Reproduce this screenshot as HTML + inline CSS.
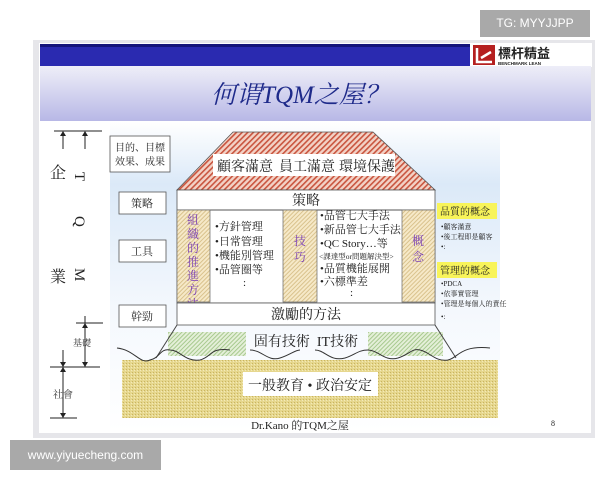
<!DOCTYPE html>
<html><head><meta charset="utf-8"><style>
html,body{margin:0;padding:0;background:#fff;width:600px;height:480px;overflow:hidden;position:relative}
*{font-family:"Liberation Serif","Noto Serif CJK SC","Noto Sans CJK TC",serif}
.wm{position:absolute;background:#a9a9a9;color:#fff;font-family:"Liberation Sans","DejaVu Sans",sans-serif}
</style></head><body>
<svg width="600" height="480" style="position:absolute;left:0;top:0">
<defs>
<linearGradient id="tb" x1="0" y1="0" x2="0" y2="1"><stop offset="0" stop-color="#eeeef8"/><stop offset="1" stop-color="#b8b8e6"/></linearGradient>
<linearGradient id="sky" x1="0" y1="0" x2="0" y2="1"><stop offset="0" stop-color="#ffffff"/><stop offset="0.2" stop-color="#dbe9f8"/><stop offset="0.6" stop-color="#f4f8fd"/><stop offset="1" stop-color="#ffffff"/></linearGradient>
<pattern id="roof" width="4" height="4" patternUnits="userSpaceOnUse" patternTransform="rotate(45)"><rect width="4" height="4" fill="#f3d2c6"/><rect width="1.6" height="4" fill="#c9553f"/></pattern>
<pattern id="col" width="3" height="3" patternUnits="userSpaceOnUse" patternTransform="rotate(45)"><rect width="3" height="3" fill="#f6e9c8"/><rect width="1" height="3" fill="#d9c28d"/></pattern>
<pattern id="gr" width="3" height="3" patternUnits="userSpaceOnUse"><rect width="3" height="3" fill="#e6d78e"/><rect width="1" height="1" fill="#c9b460"/><rect x="2" y="1" width="1" height="1" fill="#f3eab9"/></pattern>
<pattern id="gn" width="3" height="3" patternUnits="userSpaceOnUse" patternTransform="rotate(45)"><rect width="3" height="3" fill="#e4efd8"/><rect width="1" height="3" fill="#a7c98e"/></pattern>
</defs>
<rect x="33" y="40" width="562" height="398" fill="#e6e6ea"/>
<rect x="39" y="43" width="552" height="390" fill="#fff"/>
<rect x="40" y="44" width="430" height="22" fill="#2a2ab0"/>
<rect x="40" y="44" width="430" height="3" fill="#15157a"/>
<rect x="470" y="43" width="122" height="24" fill="#fff"/>
<rect x="473" y="45" width="22" height="20" fill="#b52020"/>
<path d="M477 48 v14 h15 M481 58 l10-6" stroke="#fff" stroke-width="2.5" fill="none"/>
<text x="498" y="58" font-size="13" font-weight="bold" fill="#222" style="font-family:'Noto Sans CJK TC',sans-serif">標杆精益</text>
<text x="498" y="65" font-size="4.5" font-weight="bold" fill="#222" style="font-family:'Liberation Sans',sans-serif">BENCHMARK LEAN</text>
<rect x="40" y="66" width="551" height="55" fill="url(#tb)"/>
<text x="300" y="103" text-anchor="middle" font-size="25" font-style="italic" fill="#1e2a8a">何谓TQM之屋？</text>
<rect x="110" y="122" width="390" height="310" fill="url(#sky)"/>
<g stroke="#222" stroke-width="1" fill="none">
<line x1="54" y1="131" x2="102" y2="131"/>
<line x1="63" y1="133" x2="63" y2="149"/><line x1="85" y1="133" x2="85" y2="149"/>
<line x1="85" y1="316" x2="85" y2="367"/><line x1="76" y1="323" x2="103" y2="323"/>
<line x1="50" y1="367" x2="100" y2="367"/><line x1="63" y1="350" x2="63" y2="418"/>
<line x1="50" y1="418" x2="77" y2="418"/>
</g>
<g fill="#222"><path d="M63 131l-3 5h6z M85 131l-3 5h6z M85 323l-3 5h6z M85 367l-3-5h6z M63 367l-3-5h6z M63 367l-3 5h6z M63 418l-3-5h6z"/></g>
<text x="50" y="178" font-size="16" fill="#222">企</text>
<text x="50" y="282" font-size="16" fill="#222">業</text>
<text font-size="15" fill="#222" transform="translate(75,172) rotate(90)">T</text>
<text font-size="15" fill="#222" transform="translate(75,216) rotate(90)">Q</text>
<text font-size="15" fill="#222" transform="translate(75,268) rotate(90)">M</text>
<text x="73" y="346" font-size="9" fill="#333">基礎</text>
<text x="53" y="398" font-size="10" fill="#333">社會</text>
<g fill="#fff" stroke="#555" stroke-width="0.8">
<rect x="110" y="136" width="60" height="36"/><rect x="119" y="192" width="47" height="22"/>
<rect x="119" y="240" width="47" height="22"/><rect x="119" y="305" width="47" height="22"/></g>
<g font-size="10" fill="#222"><text x="115" y="151">目的、目標</text><text x="115" y="165">效果、成果</text></g>
<g font-size="11" fill="#222"><text x="131" y="207">策略</text><text x="131" y="255">工具</text><text x="131" y="320">幹勁</text></g>
<path d="M233 132 H373 L435 190 H177 Z" fill="url(#roof)" stroke="#555" stroke-width="0.8"/>
<rect x="213" y="154" width="182" height="22" fill="#fff"/>
<g font-size="14" fill="#222"><text x="217" y="171">顧客滿意</text><text x="279" y="171">員工滿意</text><text x="339" y="171">環境保護</text></g>
<rect x="177" y="190" width="258" height="113" fill="#fff" stroke="#555" stroke-width="0.8"/>
<line x1="177" y1="210" x2="435" y2="210" stroke="#555"/>
<text x="306" y="205" text-anchor="middle" font-size="14" fill="#222">策略</text>
<rect x="177" y="210" width="33" height="92" fill="url(#col)" stroke="#666" stroke-width="0.7"/>
<rect x="283" y="210" width="34" height="92" fill="url(#col)" stroke="#666" stroke-width="0.7"/>
<rect x="402" y="210" width="33" height="92" fill="url(#col)" stroke="#666" stroke-width="0.7"/>
<g font-size="12" fill="#7a3fb5" text-anchor="middle"><text x="193" y="224">組</text><text x="193" y="238">織</text><text x="193" y="252">的</text><text x="193" y="266">推</text><text x="193" y="280">進</text><text x="193" y="294">方</text><text x="193" y="308">法</text>
<text x="300" y="245">技</text><text x="300" y="261">巧</text><text x="418" y="245">概</text><text x="418" y="261">念</text></g>
<g font-size="11" fill="#222"><text x="215" y="230">•方針管理</text><text x="215" y="245">•日常管理</text><text x="215" y="259">•機能別管理</text><text x="215" y="273">•品管圈等</text><text x="243" y="286">:</text>
<text x="320" y="219">•品管七大手法</text><text x="320" y="233">•新品管七大手法</text><text x="320" y="247">•QC Story…等</text><text x="319" y="259" font-size="7.5">&lt;課達型or問題解決型&gt;</text><text x="320" y="272">•品質機能展開</text><text x="320" y="285">•六標準差</text><text x="350" y="296">:</text></g>
<rect x="177" y="303" width="258" height="22" fill="#fff" stroke="#555" stroke-width="0.8"/>
<text x="306" y="319" text-anchor="middle" font-size="14" fill="#222">激勵的方法</text>
<rect x="168" y="332" width="78" height="24" fill="url(#gn)"/><rect x="368" y="332" width="75" height="24" fill="url(#gn)"/>
<text x="306" y="346" text-anchor="middle" font-size="14" fill="#222">固有技術&#160;&#160;IT技術</text>
<path d="M177 325 L156 358 M435 325 L456 358" stroke="#444" fill="none"/>
<rect x="122" y="360" width="376" height="58" fill="url(#gr)"/>
<path d="M117 348 C135 350,140 365,150 360 C160 358,160 348,170 350 C180 350,185 362,200 360 C212 357,210 347,230 350 M250 350 C262 350,268 362,280 358 C290 355,295 350,300 350 M315 350 C325 350,330 362,345 358 C355 355,358 350,368 350 C378 350,385 362,398 358 C410 354,412 348,420 350 C430 352,435 362,448 360 C458 358,460 345,490 348" stroke="#333" fill="none"/>
<rect x="243" y="372" width="135" height="24" fill="#fff"/>
<text x="310" y="390" text-anchor="middle" font-size="14" fill="#222">一般教育 • 政治安定</text>
<text x="300" y="429" text-anchor="middle" font-size="11" fill="#222">Dr.Kano 的TQM之屋</text>
<text x="551" y="426" font-size="8" fill="#222">8</text>
<rect x="437" y="203" width="60" height="16" fill="#f8f45a"/>
<rect x="437" y="262" width="60" height="16" fill="#f8f45a"/>
<g fill="#222"><text x="440" y="215" font-size="10">品質的概念</text><text x="440" y="274" font-size="10">管理的概念</text>
<text x="441" y="229" font-size="7">•顧客滿意</text><text x="441" y="239" font-size="7">•後工程即是顧客</text><text x="441" y="249" font-size="7">•:</text>
<text x="441" y="286" font-size="7">•PDCA</text><text x="441" y="296" font-size="7">•依事實管理</text><text x="441" y="306" font-size="7">•管理是每個人的責任</text><text x="441" y="319" font-size="7">•:</text></g>
</svg>
<div class="wm" style="left:480px;top:10px;width:110px;height:27px;line-height:27px;text-align:center;font-size:12px">TG: MYYJJPP</div>
<div class="wm" style="left:10px;top:440px;width:151px;height:30px;line-height:30px;text-align:center;font-size:12px">www.yiyuecheng.com</div>
</body></html>
